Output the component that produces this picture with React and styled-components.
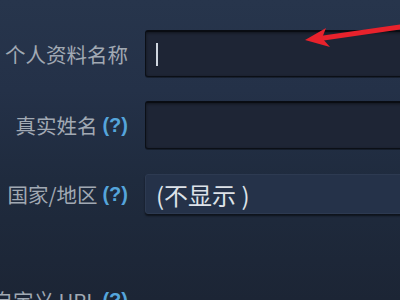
import React from "react";
import styled, { createGlobalStyle } from "styled-components";

const GlobalStyle = createGlobalStyle`
    html, body {
        margin: 0;
        padding: 0;
        width: 400px;
        height: 300px;
        overflow: hidden;
        background: #1d2738;
    }
`;

const Page = styled.div`
    position: relative;
    width: 400px;
    height: 300px;
    overflow: hidden;
    background: linear-gradient(
        180deg,
        #27354c 0%,
        #243148 30%,
        #1f2b3e 60%,
        #1c2535 100%
    );
    font-family: "Noto Sans CJK SC", "Noto Sans", sans-serif;
`;

const Form = styled.div`
    display: grid;
    grid-template-columns: 128px 1fr;
    column-gap: 17px;
    padding-top: 30px;
`;

const Row = styled.div`
    display: contents;
`;

const Label = styled.div`
    display: flex;
    justify-content: flex-end;
    align-items: center;
    height: ${(p) => p.$h}px;
    margin-top: ${(p) => p.$gap || 0}px;
    white-space: nowrap;
    font-size: 20.5px;
    color: #a1a9b3;
`;

const Help = styled.span`
    margin-left: 5px;
    color: #55a5db;
    font-weight: bold;
    font-family: "Liberation Sans", Arial, sans-serif;
    font-size: 20px;
`;

const TextInput = styled.div`
    box-sizing: border-box;
    width: 300px;
    height: ${(p) => p.$h}px;
    margin-top: ${(p) => p.$gap || 0}px;
    background: #1e2535;
    border: 1px solid #0b0f16;
    border-top: 2px solid #090c12;
    border-radius: 3px;
    box-shadow: inset 0 1px 3px rgba(0, 0, 0, 0.45),
        0 1px 0 rgba(0, 0, 0, 0.35);
    display: flex;
    align-items: center;
    padding-left: 10px;
`;

const Caret = styled.span`
    display: block;
    width: 2px;
    height: 23px;
    background: #cfd6df;
`;

const Select = styled.div`
    box-sizing: border-box;
    width: 300px;
    height: 40px;
    margin-top: ${(p) => p.$gap || 0}px;
    background: #253249;
    border: 1px solid #2d3a51;
    border-radius: 3px;
    box-shadow: 0 2px 2px rgba(0, 0, 0, 0.55);
    display: flex;
    align-items: center;
    padding-left: 10px;
    font-size: 24px;
    color: #dde2e8;
    white-space: pre;
`;

const Empty = styled.div`
    margin-top: ${(p) => p.$gap || 0}px;
`;

const Arrow = styled.svg`
    position: absolute;
    left: 0;
    top: 0;
    pointer-events: none;
`;

export default function App() {
    return (
        <Page>
            <GlobalStyle />
            <Form>
                <Row>
                    <Label $h={47}>个人资料名称</Label>
                    <TextInput $h={47}>
                        <Caret />
                    </TextInput>
                </Row>
                <Row>
                    <Label $h={48} $gap={24}>
                        真实姓名<Help>(?)</Help>
                    </Label>
                    <TextInput $h={48} $gap={24} />
                </Row>
                <Row>
                    <Label $h={40} $gap={25}>
                        国家/地区<Help>(?)</Help>
                    </Label>
                    <Select $gap={25}>(不显示 )</Select>
                </Row>
                <Row>
                    <Label $h={44} $gap={64}>
                        自定义 URL<Help>(?)</Help>
                    </Label>
                    <Empty $gap={64} />
                </Row>
            </Form>
            <Arrow width="400" height="300" viewBox="0 0 400 300">
                <line
                    x1="404"
                    y1="26.5"
                    x2="320"
                    y2="38.5"
                    stroke="#e8222c"
                    strokeWidth="5"
                />
                <polygon
                    points="305,40 326,28 322,38 330,47"
                    fill="#e8222c"
                />
            </Arrow>
        </Page>
    );
}
